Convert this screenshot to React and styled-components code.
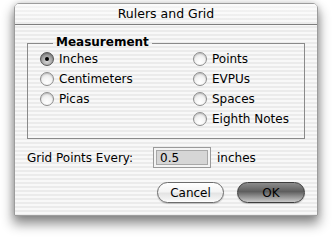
import React from "react";
import styled, { createGlobalStyle } from "styled-components";

const GlobalStyle = createGlobalStyle`
  html, body {
    margin: 0;
    padding: 0;
    background: #ffffff;
  }
  body {
    font-family: "DejaVu Sans", "Liberation Sans", sans-serif;
    font-size: 12px;
    color: #000;
  }
`;

const stripes = `repeating-linear-gradient(
  to bottom,
  #f8f8f8 0px,
  #f8f8f8 2px,
  #ebebeb 2px,
  #ebebeb 4px
)`;

const Page = styled.div`
  width: 332px;
  height: 240px;
  padding: 3px 0 0 14px;
  box-sizing: border-box;
  overflow: hidden;
`;

const Window = styled.div`
  width: 304px;
  height: 213px;
  box-sizing: border-box;
  border: 1px solid #9c9c9c;
  border-radius: 5px 5px 0 0;
  background: ${stripes};
  box-shadow: 0 7px 12px 1px rgba(0, 0, 0, 0.45), 0 0 6px rgba(0, 0, 0, 0.15);
  display: flex;
  flex-direction: column;
`;

const TitleBar = styled.div`
  height: 20px;
  border-bottom: 1px solid #7e7e7e;
  border-radius: 4px 4px 0 0;
  background: linear-gradient(to bottom, rgba(255, 255, 255, 0.5), rgba(255, 255, 255, 0)),
    ${stripes};
  display: flex;
  align-items: center;
  justify-content: center;
  font-size: 12.5px;
  line-height: 20px;
`;

const Body = styled.div`
  flex: 1;
  padding: 11px 12px 0 12px;
  display: flex;
  flex-direction: column;
`;

const Group = styled.fieldset`
  margin: 0;
  padding: 0 0 9px 12px;
  border: 1px solid #8a8a8a;
  min-width: 0;
`;

const Legend = styled.legend`
  margin-left: 13px;
  padding: 0 3px 3px 3px;
  font-weight: bold;
  font-size: 12px;
  line-height: 12px;
`;

const Options = styled.div`
  margin-top: -2px;
  display: grid;
  grid-template-columns: 153px 1fr;
  grid-auto-flow: column;
  grid-template-rows: repeat(4, 20px);
`;

const Option = styled.label`
  display: flex;
  align-items: center;
  gap: 5px;
  white-space: nowrap;
`;

const Radio = styled.span`
  position: relative;
  width: 14px;
  height: 14px;
  box-sizing: border-box;
  border-radius: 50%;
  border: 1px solid ${(p) => (p.$checked ? "#555" : "#8c8c8c")};
  background: ${(p) =>
    p.$checked
      ? "radial-gradient(circle at 50% 70%, #d8d8d8 0%, #9a9a9a 60%, #6e6e6e 100%)"
      : "radial-gradient(circle at 50% 75%, #ffffff 0%, #f2f2f2 50%, #cfcfcf 100%)"};
  box-shadow: inset 0 1px 1px rgba(0, 0, 0, 0.15);
  flex: none;

  &::after {
    content: "";
    display: ${(p) => (p.$checked ? "block" : "none")};
    position: absolute;
    left: 4px;
    top: 4px;
    width: 4px;
    height: 4px;
    border-radius: 50%;
    background: #000;
  }
`;

const FieldRow = styled.div`
  margin-top: 8px;
  height: 21px;
  display: flex;
  align-items: center;
`;

const FieldLabel = styled.span`
  width: 126px;
  flex: none;
`;

const Field = styled.div`
  width: 58px;
  height: 21px;
  box-sizing: border-box;
  border: 1px solid #9a9a9a;
  background: #d6d6d6;
  box-shadow: inset 0 0 0 2px #f4f4f4, inset 0 0 0 3px #a8a8a8;
  padding-left: 6px;
  display: flex;
  align-items: center;
`;

const Unit = styled.span`
  margin-left: 6px;
`;

const Buttons = styled.div`
  margin-top: 14px;
  display: flex;
  justify-content: flex-end;
  gap: 13px;
`;

const Button = styled.button`
  width: ${(p) => (p.$default ? "68px" : "67px")};
  height: 21px;
  padding: 0;
  border-radius: 11px;
  font-family: inherit;
  font-size: 12px;
  color: #000;
  border: 1px solid ${(p) => (p.$default ? "#3e3e3e" : "#6c6c6c")};
  background: ${(p) =>
    p.$default
      ? "linear-gradient(to bottom, #8c8c8c 0%, #5e5e5e 45%, #727272 55%, #acacac 85%, #cacaca 100%)"
      : "linear-gradient(to bottom, #ffffff 0%, #f4f4f4 45%, #e4e4e4 55%, #f2f2f2 85%, #ffffff 100%)"};
  box-shadow: 0 1px 1px rgba(0, 0, 0, 0.2);
`;

const left = [
  { label: "Inches", checked: true },
  { label: "Centimeters" },
  { label: "Picas" },
  { label: "", empty: true },
];

const right = [
  { label: "Points" },
  { label: "EVPUs" },
  { label: "Spaces" },
  { label: "Eighth Notes" },
];

const App = () => {
  return (
    <Page>
      <GlobalStyle />
      <Window>
        <TitleBar>Rulers and Grid</TitleBar>
        <Body>
          <Group>
            <Legend>Measurement</Legend>
            <Options>
              {[...left, ...right].map((item, index) =>
                item.empty ? (
                  <span key={index} />
                ) : (
                  <Option key={index}>
                    <Radio $checked={item.checked} />
                    {item.label}
                  </Option>
                )
              )}
            </Options>
          </Group>
          <FieldRow>
            <FieldLabel>Grid Points Every:</FieldLabel>
            <Field>0.5</Field>
            <Unit>inches</Unit>
          </FieldRow>
          <Buttons>
            <Button>Cancel</Button>
            <Button $default>OK</Button>
          </Buttons>
        </Body>
      </Window>
    </Page>
  );
};

export default App;
